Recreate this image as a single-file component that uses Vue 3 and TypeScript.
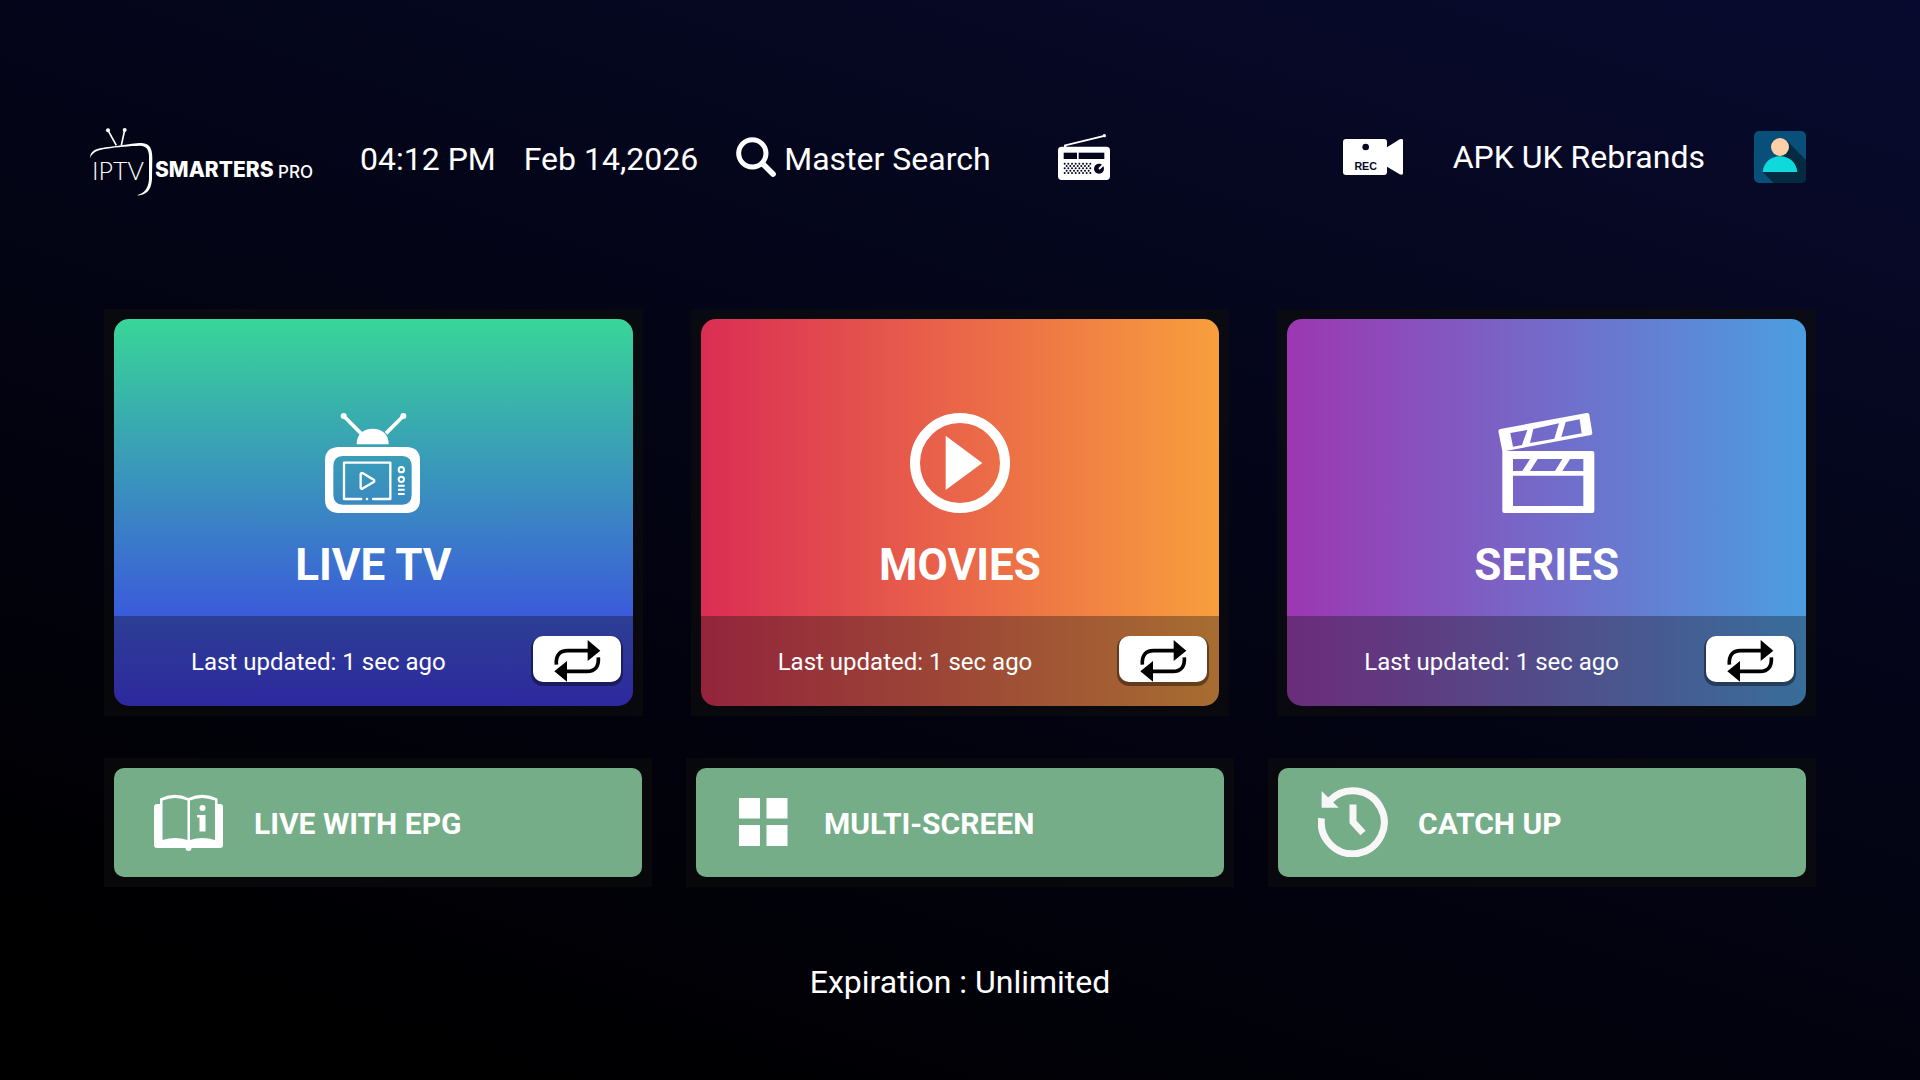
<script setup lang="ts">
interface Card {
  id: 'live' | 'movies' | 'series'
  title: string
  updated: string
}

interface Tile {
  id: 'epg' | 'multi' | 'catchup'
  label: string
}

const time = '04:12 PM'
const date = 'Feb 14,2026'

const cards: Card[] = [
  { id: 'live', title: 'LIVE TV', updated: 'Last updated: 1 sec ago' },
  { id: 'movies', title: 'MOVIES', updated: 'Last updated: 1 sec ago' },
  { id: 'series', title: 'SERIES', updated: 'Last updated: 1 sec ago' },
]

const tiles: Tile[] = [
  { id: 'epg', label: 'LIVE WITH EPG' },
  { id: 'multi', label: 'MULTI-SCREEN' },
  { id: 'catchup', label: 'CATCH UP' },
]

// Speaker grille of the radio: staggered rows of holes
const grille = Array.from({ length: 5 }, (_, row) =>
  Array.from({ length: row % 2 ? 7 : 8 }, (_, col) => ({
    x: 1034 + col * 11 + (row % 2 ? 6 : 0),
    y: 131 + row * 7,
  })),
).flat()
</script>

<template>
  <main class="page">
    <header class="header">
      <svg class="logo" width="225" height="74" viewBox="0 -4 225 74" fill="#fff" role="img" aria-label="IPTV Smarters Pro">
        <g transform="scale(0.33333) translate(-30 -20)">
          <path d="M30 116C32 86 60 86 110 80C150 74 165 71 185 71C210 72 217 90 217 115L216 180C214 215 195 230 171 228C193 222 205 207 207 180L207 110C206 88 198 80 180 79C150 80 110 83 80 88C50 92 38 99 30 116Z" />
          <path d="M84 33L109 78M134 32L124 78" stroke="#fff" stroke-width="5" fill="none" />
          <circle cx="84" cy="33" r="6" />
          <circle cx="134" cy="32" r="6" />
        </g>
        <text class="logo-thin" x="2" y="54">IPTV</text>
        <text class="logo-bold" x="65" y="51">SMARTERS</text>
        <text class="logo-pro" x="188" y="52">PRO</text>
      </svg>
      <time class="time">{{ time }}</time>
      <time class="date">{{ date }}</time>
      <button class="search" type="button">
        <svg width="40" height="44" viewBox="48 51 120 132" fill="none" stroke="#fff">
          <circle cx="97" cy="100" r="41" stroke-width="15" />
          <path d="M128 131L159 162" stroke-width="17" stroke-linecap="round" />
        </svg>
        <span>Master Search</span>
      </button>
      <button class="radio" type="button" aria-label="Radio">
        <svg width="52" height="50" viewBox="1014 42 156 150" fill="#fff">
          <path d="M1032 82V74L1152 45L1154 50L1039 78V82Z" />
          <circle cx="1153" cy="47" r="5" />
          <rect x="1014" y="80" width="156" height="100" rx="11" />
          <g fill="#04051d">
            <rect x="1031" y="98" width="40" height="19" />
            <rect x="1076" y="98" width="77" height="19" />
            <circle v-for="(hole, i) in grille" :key="i" :cx="hole.x" :cy="hole.y" r="3" />
            <circle cx="1137" cy="146" r="15" />
          </g>
          <path d="M1137 147L1149 135" stroke="#fff" stroke-width="6" />
        </svg>
      </button>

      <div class="account">
        <button class="rec" type="button" aria-label="Recordings">
          <svg width="60" height="36" viewBox="66 87 180 108" fill="#fff">
            <rect x="66" y="87" width="132" height="108" rx="9" />
            <path d="M198 112L236 88Q246 84 246 92V190Q246 197 236 193L198 170Z" />
            <circle cx="134" cy="111" r="10" fill="#060825" />
            <text class="rec-text" x="134" y="179" text-anchor="middle">REC</text>
          </svg>
        </button>
        <span class="name">APK UK Rebrands</span>
        <button class="avatar" type="button" aria-label="Profile">
          <svg width="52" height="52" viewBox="1302 63 156 156">
            <rect x="1302" y="63" width="156" height="156" fill="#084f7a" />
            <path d="M1399 91L1458 150V219H1361L1328 186L1380 150Z" fill="#052b42" />
            <circle cx="1380" cy="111" r="27" fill="#fdd0a9" />
            <path d="M1328 186C1331 158 1352 139 1380 139C1408 139 1429 158 1432 186Z" fill="#0fd9da" />
          </svg>
        </button>
      </div>
    </header>

    <section class="cards">
      <article v-for="card in cards" :key="card.id" class="card" :class="card.id">
        <button class="card-main" type="button">
          <svg v-if="card.id === 'live'" width="100" height="100" viewBox="40 39 300 300" fill="#fff">
            <path d="M102 48L154 100M281 48L229 100" stroke="#fff" stroke-width="11" />
            <circle cx="102" cy="48" r="9" />
            <circle cx="281" cy="48" r="9" />
            <path d="M141 133C140 103 162 86 189 86C216 86 238 103 237 133Z" />
            <path fill-rule="evenodd" d="M85 141H293Q331 144 331 181V299Q331 336 293 339H85Q46 336 46 299V181Q46 144 85 141ZM99 168Q71 170 71 198V284Q71 312 99 314H278Q306 312 306 284V198Q306 170 278 168Z" />
            <g fill="none" stroke="#fff" stroke-width="7" stroke-linecap="round" stroke-linejoin="round">
              <path d="M155 297H103V188H242V297H190" />
              <path d="M153 222V264Q154 268 160 265L192 246Q196 243 192 239L160 220Q154 217 153 222Z" />
            </g>
            <circle cx="172" cy="297" r="4" />
            <circle cx="275" cy="209" r="8" fill="none" stroke="#fff" stroke-width="6" />
            <circle cx="275" cy="238" r="8" fill="none" stroke="#fff" stroke-width="6" />
            <path d="M265 257H285M265 269H285M265 282H285" stroke="#fff" stroke-width="6" />
          </svg>
          <svg v-else-if="card.id === 'movies'" width="100" height="100" viewBox="57 39 300 300" fill="#fff">
            <circle cx="207" cy="189" r="135" fill="none" stroke="#fff" stroke-width="30" />
            <path d="M164 107L274 189L164 270Z" />
          </svg>
          <svg v-else width="100" height="100" viewBox="50 39 300 300" fill="#fff" fill-rule="evenodd">
            <path d="M60 87L319 39Q325 38 327 44L336 100Q336 104 332 105L76 153H336Q342 153 342 159V333Q342 339 336 339H72Q66 339 66 333V153L54 94Q54 88 60 87ZM90 99L98 140L125 135L141 90ZM159 87L149 129L222 116L236 70ZM256 66L243 111L304 100L298 58ZM98 177V213H126L149 177ZM172 177L149 213H224L246 177ZM269 177L246 213H309V177ZM98 227V318H309V227Z" />
          </svg>
          <span class="card-title">{{ card.title }}</span>
        </button>
        <footer class="card-footer">
          <span class="updated">{{ card.updated }}</span>
          <button class="refresh" type="button" :aria-label="`Refresh ${card.title}`">
            <svg width="88" height="46" viewBox="86 108 264 138">
              <path d="M156 194C154 166 166 152 190 152H252M186 214H248C272 214 284 200 282 172" fill="none" stroke="#000" stroke-width="11" />
              <path d="M250 120L288 152L250 183ZM188 183L150 214L188 245Z" />
            </svg>
          </button>
        </footer>
      </article>
    </section>

    <nav class="tiles">
      <button v-for="tile in tiles" :key="tile.id" class="tile" type="button">
        <svg v-if="tile.id === 'epg'" width="70" height="70" viewBox="0 0 70 70" fill="#fff">
          <path fill-rule="evenodd" d="M3 17H6V11.500Q20 4.500 34.500 11Q49 4.500 63.500 11.500V17H66Q69 17 69 20V58Q69 61 66 61H37.500A3 3 0 0 1 31.500 61H3Q0 61 0 58V20Q0 17 3 17ZM8.500 13.500V53Q21 49 33.500 53V13.500Q21 8.500 8.500 13.500ZM36 13.500V53Q48 49 61 53V13.500Q48 8.500 36 13.500Z" />
          <circle cx="48.500" cy="21" r="3" />
          <path d="M43 28H51.500V44.500H45.500V30.500H43Z" />
        </svg>
        <svg v-else-if="tile.id === 'multi'" width="58" height="70" viewBox="0 0 58 70" fill="#fff">
          <path d="M3 11H24V31.500H3ZM30.500 11H51.500V31.500H30.500ZM3 38H24V59H3ZM30.500 38H51.500V59H30.500Z" />
        </svg>
        <svg v-else width="70" height="70" viewBox="0 0 70 70" fill="none" stroke="#f8f6f7" stroke-width="7">
          <path d="M3.500 31.300A31.500 31.500 0 1 0 12 13.500" />
          <path d="M35 17.500V35L45 46" />
          <path d="M3.600 4V20.700H20.700Z" fill="#f8f6f7" stroke="none" />
        </svg>
        <span>{{ tile.label }}</span>
      </button>
    </nav>

    <p class="expiration">Expiration : Unlimited</p>
  </main>
</template>

<style>
body {
  margin: 0;
  background: #000;
}
</style>

<style scoped>
.page {
  box-sizing: border-box;
  min-height: 100vh;
  padding: 123px 114px 40px;
  background: linear-gradient(18deg, #000000 8%, #02020e 35%, #030415 55%, #060823 80%, #070a2e 100%);
  color: #fff;
  font-family: Roboto, "Liberation Sans", sans-serif;
  font-size: 32px;
  line-height: 40px;
}

button {
  padding: 0;
  border: 0;
  background: none;
  color: inherit;
  font: inherit;
  cursor: pointer;
}

svg {
  display: block;
  flex: none;
}

.header {
  display: flex;
  align-items: center;
  height: 72px;
  margin-left: -24px;
  white-space: nowrap;
}

.logo-thin {
  font-family: Lato, sans-serif;
  font-size: 25px;
  font-weight: 300;
}

.logo-bold {
  font-family: Inter, sans-serif;
  font-size: 21px;
  font-weight: 800;
}

.logo-pro {
  font-family: Inter, sans-serif;
  font-size: 17px;
  font-weight: 500;
}

.time {
  margin-left: 45px;
}

.date {
  margin-left: 28px;
}

.search {
  display: flex;
  align-items: center;
  gap: 8px;
  margin-left: 38px;
}

.radio {
  margin-left: 67px;
}

.account {
  display: flex;
  align-items: center;
  margin: 0 0 4px auto;
}

.rec-text {
  fill: #060825;
  font-family: "Liberation Sans", sans-serif;
  font-size: 32px;
  font-weight: 700;
}

.name {
  margin: 0 49px 0 50px;
}

.avatar {
  border-radius: 5px;
  overflow: hidden;
}

.cards {
  display: grid;
  grid-template-columns: repeat(3, 1fr);
  gap: 68px;
  margin-top: 124px;
}

.card {
  position: relative;
  display: flex;
  flex-direction: column;
}

.card::before,
.tile::before {
  content: "";
  position: absolute;
  inset: -10px;
  background: rgba(14, 13, 14, 0.6);
}

.card-main,
.card-footer {
  position: relative;
}

.card-main {
  display: flex;
  flex-direction: column;
  align-items: center;
  gap: 26px;
  padding: 94px 0 25px;
  border-radius: 15px 15px 0 0;
}

.card-title {
  font-size: 44px;
  font-weight: 700;
  line-height: 52px;
}

.card-footer {
  display: flex;
  align-items: center;
  gap: 10px;
  height: 90px;
  padding-right: 12px;
  border-radius: 0 0 15px 15px;
}

.live .card-main {
  background: linear-gradient(#38d698, #3b5bdb);
}

.live .card-footer {
  background: linear-gradient(#2c3f94, #2e289f);
}

.movies .card-main {
  background: linear-gradient(to right, #db2d54, #f89f3d);
}

.movies .card-footer {
  background: linear-gradient(to right, #93243c, #a76d30);
}

.series .card-main {
  background: linear-gradient(to right, #9d37b1, #4b9ee1);
}

.series .card-footer {
  background: linear-gradient(to right, #6b2c7a, #386d9a);
}

.updated {
  flex: 1;
  padding-top: 2px;
  font-size: 24px;
  line-height: 32px;
  text-align: center;
}

.refresh {
  margin-bottom: 4px;
  border-radius: 10px;
  background: #fff;
  box-shadow: 0 2px 0 2px rgba(0, 0, 0, 0.4);
}

.tiles {
  display: grid;
  grid-template-columns: repeat(3, 1fr);
  gap: 54px;
  margin-top: 62px;
}

.tile {
  position: relative;
  isolation: isolate;
  display: flex;
  align-items: center;
  gap: 30px;
  height: 109px;
  padding: 3px 0 0 40px;
  font-size: 30px;
  font-weight: 700;
}

.tile svg {
  margin-bottom: 4px;
}

.tile::before {
  z-index: -2;
}

.tile::after {
  content: "";
  position: absolute;
  inset: 0;
  z-index: -1;
  border-radius: 10px;
  background: #74ad88;
}

.expiration {
  margin: 85px 0 0;
  text-align: center;
}
</style>
